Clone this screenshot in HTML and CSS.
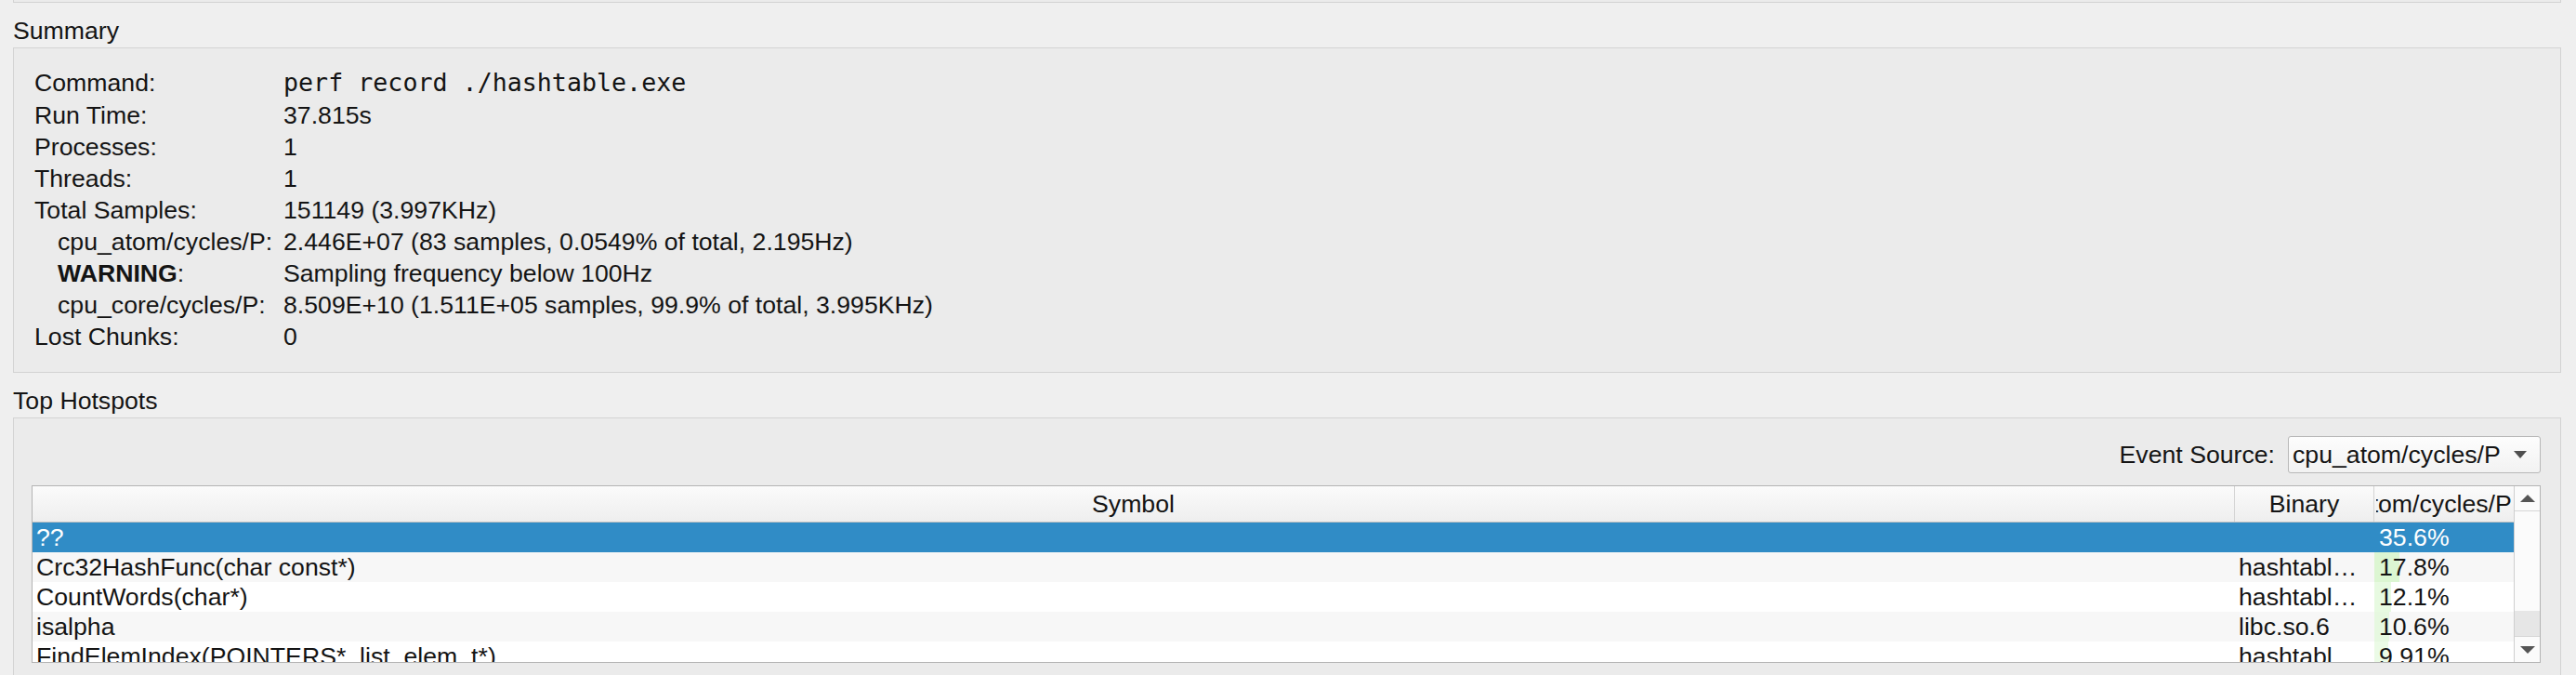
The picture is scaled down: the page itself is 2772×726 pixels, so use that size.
FILE: index.html
```html
<!DOCTYPE html>
<html>
<head>
<meta charset="utf-8">
<title>Summary</title>
<link rel="stylesheet" href="styles.css">
</head>
<body>
<div class="prev-box"></div>

<section class="group">
  <div class="group-title">Summary</div>
  <div class="group-box summary">
    <div class="form">
      <div class="lbl first">Command:</div><div class="val first mono">perf record ./hashtable.exe</div>
      <div class="lbl">Run Time:</div><div class="val">37.815s</div>
      <div class="lbl">Processes:</div><div class="val">1</div>
      <div class="lbl">Threads:</div><div class="val">1</div>
      <div class="lbl">Total Samples:</div><div class="val">151149 (3.997KHz)</div>
      <div class="lbl sub">cpu_atom/cycles/P:</div><div class="val">2.446E+07 (83 samples, 0.0549% of total, 2.195Hz)</div>
      <div class="lbl sub"><b>WARNING</b>:</div><div class="val">Sampling frequency below 100Hz</div>
      <div class="lbl sub">cpu_core/cycles/P:</div><div class="val">8.509E+10 (1.511E+05 samples, 99.9% of total, 3.995KHz)</div>
      <div class="lbl">Lost Chunks:</div><div class="val">0</div>
    </div>
  </div>
</section>

<section class="group">
  <div class="group-title">Top Hotspots</div>
  <div class="group-box hotspots">
    <div class="source-row">
      <span class="source-label">Event Source:</span>
      <div class="combo">
        <span class="combo-text">cpu_atom/cycles/P</span>
        <svg class="combo-arrow" width="14" height="8" viewBox="0 0 14 8"><polygon points="0,0 14,0 7,8" fill="#4f4f4f"/></svg>
      </div>
    </div>
    <div class="table">
      <div class="tmain">
        <div class="trow thead">
          <div class="th">Symbol</div>
          <div class="th">Binary</div>
          <div class="th th-pct"><div class="clip"><span class="shift">cpu_atom/cycles/P</span></div></div>
        </div>
        <div class="trow selected">
          <div class="td">??</div>
          <div class="td"></div>
          <div class="td pct">35.6%</div>
        </div>
        <div class="trow alt">
          <div class="td">Crc32HashFunc(char const*)</div>
          <div class="td">hashtabl…</div>
          <div class="td pct" style="--pct:17.8%;--bar:#dcf6d2">17.8%</div>
        </div>
        <div class="trow">
          <div class="td">CountWords(char*)</div>
          <div class="td">hashtabl…</div>
          <div class="td pct" style="--pct:12.1%;--bar:#e7fae1">12.1%</div>
        </div>
        <div class="trow alt">
          <div class="td">isalpha</div>
          <div class="td">libc.so.6</div>
          <div class="td pct" style="--pct:10.6%;--bar:#e6f8e0">10.6%</div>
        </div>
        <div class="trow">
          <div class="td">FindElemIndex(POINTERS*, list_elem_t*)</div>
          <div class="td">hashtabl…</div>
          <div class="td pct" style="--pct:9.91%;--bar:#ebfbe6">9.91%</div>
        </div>
      </div>
      <div class="scrollbar">
        <div class="sb-btn sb-up">
          <svg width="16" height="8" viewBox="0 0 16 8"><polygon points="0,8 16,8 8,0" fill="#555"/></svg>
        </div>
        <div class="sb-handle"></div>
        <div class="sb-groove"></div>
        <div class="sb-btn sb-down">
          <svg width="16" height="8" viewBox="0 0 16 8"><polygon points="0,0 16,0 8,8" fill="#555"/></svg>
        </div>
      </div>
    </div>
  </div>
</section>
</body>
</html>
```

FILE: styles.css
```css
html, body {
  margin: 0;
  background: #efefef;
  overflow: hidden;
}

body {
  width: 2772px;
  height: 726px;
  box-sizing: border-box;
  padding: 0 16px 0 14px;
  font-family: "Liberation Sans", Arial, sans-serif;
  font-size: 26.67px;
  color: #141414;
}

.prev-box {
  height: 2px;
  border: 1px solid #d3d3d3;
  border-top: none;
  background: #ebebeb;
}

.group {
  margin-top: 13px;
}

.group-title {
  line-height: 35px;
  height: 35px;
  white-space: nowrap;
}

.group-box {
  border: 1px solid #d3d3d3;
  background: #ebebeb;
}

.summary {
  padding: 19px 22px 21px 22px;
}

.form {
  display: grid;
  grid-template-columns: 268px 1fr;
  grid-template-rows: 36px;
  grid-auto-rows: 34px;
  line-height: 34px;
  white-space: nowrap;
}

.form .first {
  line-height: 36px;
}

.mono {
  font-family: "DejaVu Sans Mono", monospace;
  font-size: 26.67px;
}

.lbl.sub {
  padding-left: 25px;
}

.lbl b {
  font-weight: bold;
}

.hotspots {
  padding: 19px 21px 19px 19px;
}

.source-row {
  display: flex;
  justify-content: flex-end;
  align-items: center;
  gap: 14px;
  height: 40px;
}

.source-label {
  white-space: nowrap;
}

.combo {
  width: 272px;
  height: 40px;
  box-sizing: border-box;
  border: 1px solid #b8b8b8;
  border-radius: 3px;
  background: linear-gradient(to bottom, #fdfdfd, #f2f2f2);
  display: flex;
  align-items: center;
  padding: 0 14px 0 4px;
  gap: 4px;
}

.combo-text {
  flex: 1;
  white-space: nowrap;
  line-height: 38px;
}

.combo-arrow {
  display: block;
}

.table {
  margin-top: 13px;
  border: 1px solid #b4b4b4;
  height: 189px;
  display: flex;
  background: #ffffff;
  overflow: hidden;
}

.tmain {
  flex: 1;
  display: flex;
  flex-direction: column;
  overflow: hidden;
}

.trow {
  display: grid;
  grid-template-columns: 1fr 150px 150px;
  height: 32px;
  flex: none;
  line-height: 32px;
  white-space: nowrap;
  background: #ffffff;
}

.trow.alt {
  background: #f7f7f7;
}

.trow.selected {
  background: #308cc6;
  color: #ffffff;
}

.thead {
  height: 39px;
  line-height: 38px;
  box-sizing: border-box;
  border-bottom: 1px solid #c3c3c3;
  background: linear-gradient(to bottom, #fbfbfb, #eeeeee);
}

.th {
  text-align: center;
  overflow: hidden;
  border-right: 1px solid #d4d4d4;
}

.th-pct {
  border-right: none;
  text-align: left;
  padding: 0 2px;
}

.clip {
  overflow: hidden;
  white-space: nowrap;
}

.shift {
  display: inline-block;
  margin-left: -78px;
}

.td {
  overflow: hidden;
  padding-left: 4px;
}

.td.pct {
  padding-left: 5px;
  background: linear-gradient(to right, var(--bar, transparent) var(--pct, 0%), transparent var(--pct, 0%));
}

.scrollbar {
  width: 28px;
  flex: none;
  box-sizing: border-box;
  border-left: 1px solid #cfcfcf;
  display: flex;
  flex-direction: column;
  background: #fbfbfb;
}

.sb-btn {
  display: flex;
  align-items: center;
  justify-content: center;
  flex: none;
  background: #fbfbfb;
}

.sb-up {
  height: 27px;
  box-sizing: border-box;
  border-bottom: 1px solid #d6d6d6;
}

.sb-down {
  height: 28px;
  box-sizing: border-box;
  border-top: 1px solid #d6d6d6;
}

.sb-handle {
  height: 107px;
  flex: none;
  background: #fbfbfb;
}

.sb-groove {
  flex: 1;
  background: #e6e6e6;
}
```
